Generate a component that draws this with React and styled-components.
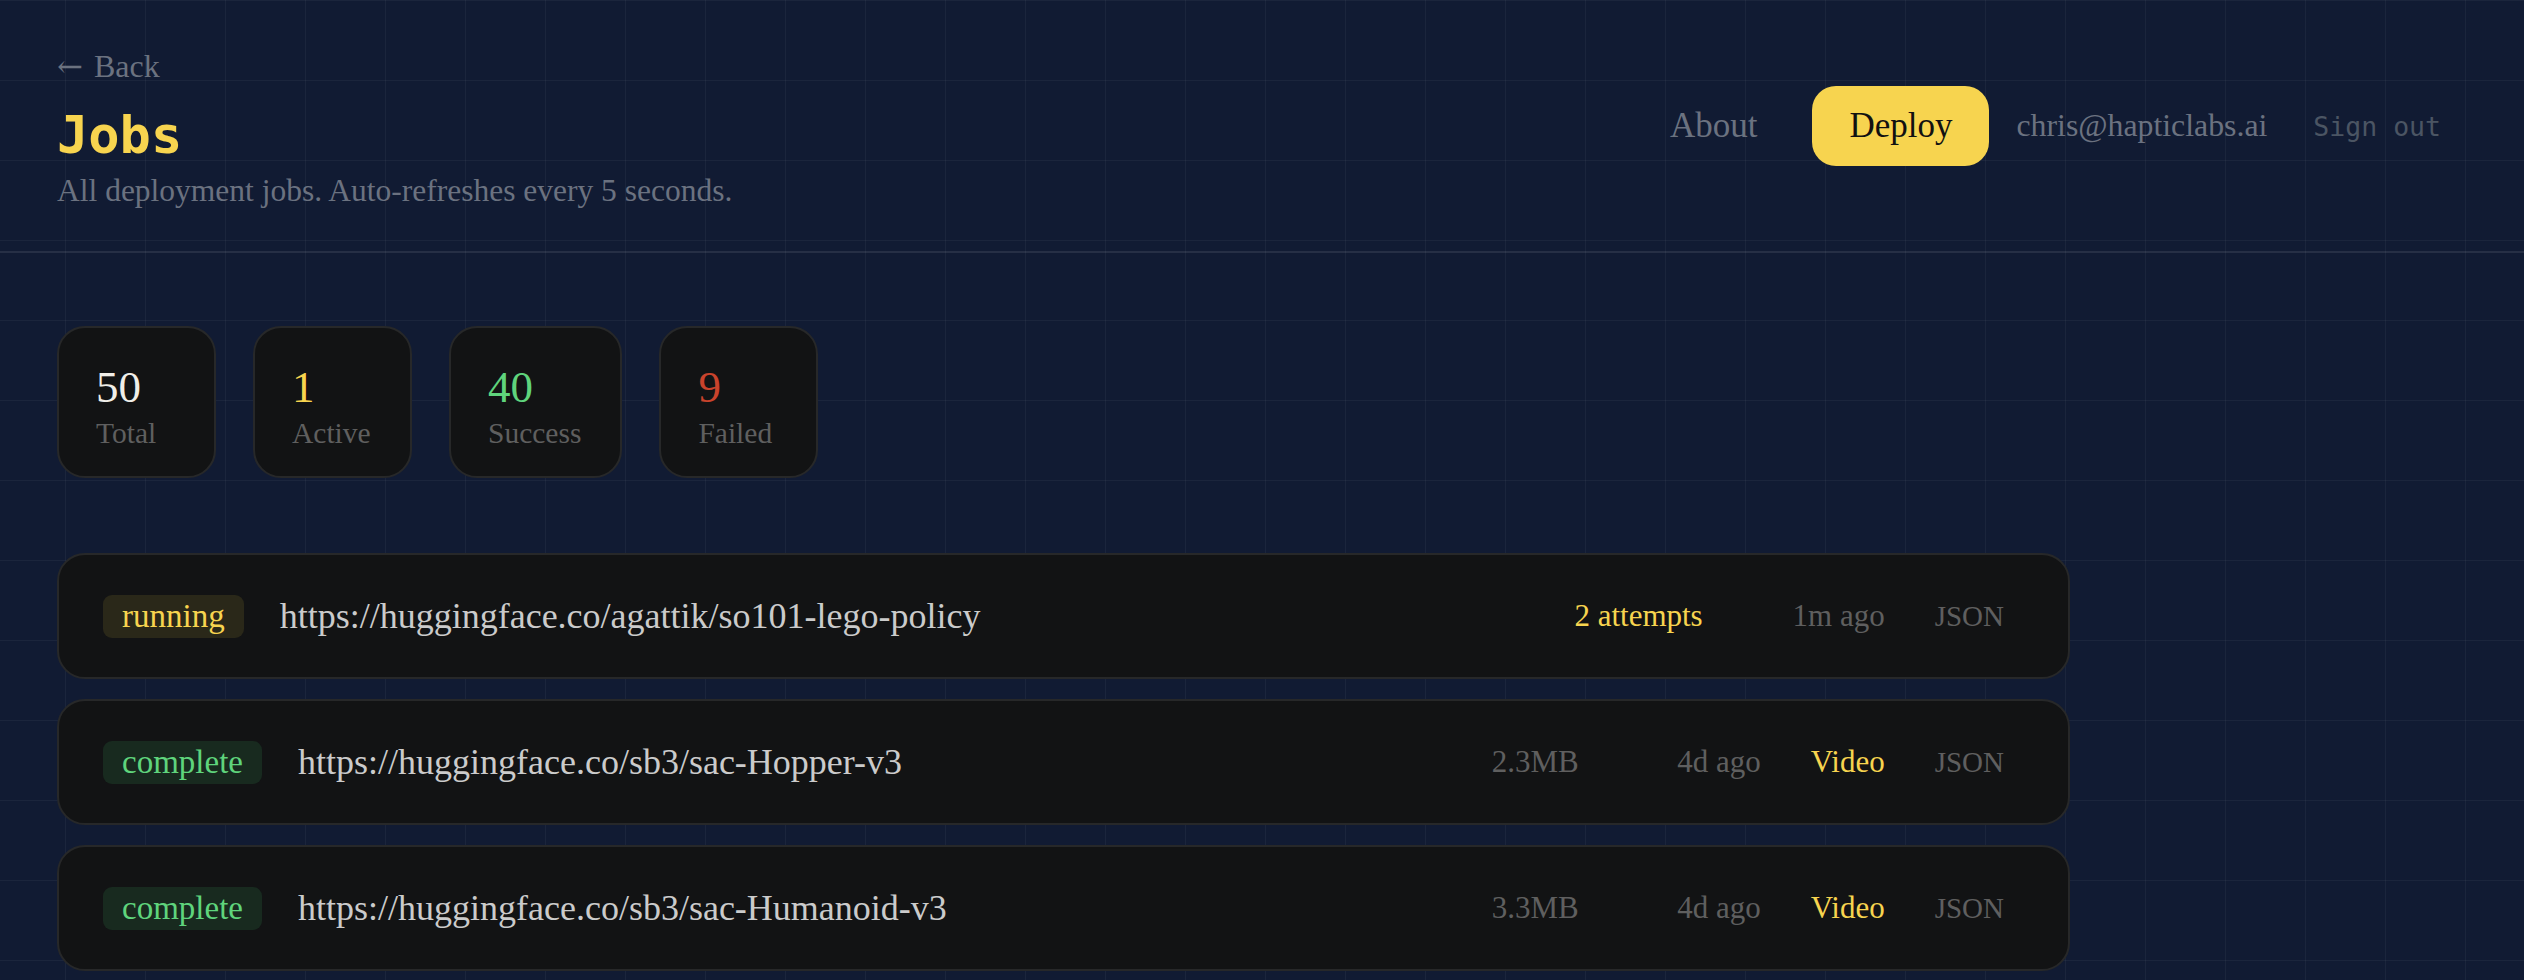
import React from "react";
import styled, { createGlobalStyle } from "styled-components";

const SERIF = `"Liberation Serif", "DejaVu Serif", serif`;
const MONO = `"DejaVu Sans Mono", monospace`;

const GlobalStyle = createGlobalStyle`
  html, body { margin: 0; padding: 0; }
  body {
    min-height: 980px;
    background-color: #111b33;
    background-image:
      linear-gradient(rgba(255,255,255,0.045) 1px, transparent 1px),
      linear-gradient(90deg, rgba(255,255,255,0.045) 1px, transparent 1px);
    background-size: 80px 80px;
    background-position: 65px 0;
    font-family: ${SERIF};
    color: #d1d1d1;
  }
`;

const Header = styled.header`
  display: flex;
  justify-content: space-between;
  align-items: flex-start;
  padding: 48px 83px 42px 57px;
  border-bottom: 2px solid rgba(255, 255, 255, 0.09);
`;

const TitleBlock = styled.div`
  display: flex;
  flex-direction: column;
`;

const BackLink = styled.a`
  font-size: 32px;
  line-height: 36px;
  color: #6b7280;
  text-decoration: none;
  margin-bottom: 21px;
`;

const Arrow = styled.span`
  font-family: "DejaVu Serif", serif;
  font-size: 31px;
  margin-right: 3px;
`;

const Title = styled.h1`
  margin: 0;
  font-family: ${MONO};
  font-weight: 700;
  font-size: 52px;
  line-height: 60px;
  color: #f7d44f;
`;

const Subtitle = styled.p`
  margin: 8px 0 0;
  font-size: 31.5px;
  line-height: 36px;
  color: #6b7280;
`;

const Nav = styled.nav`
  display: flex;
  align-items: center;
  margin-top: 38px;
`;

const NavLink = styled.a`
  font-size: 35px;
  color: #6b7280;
  text-decoration: none;
  margin-right: 55px;
`;

const DeployButton = styled.button`
  height: 80px;
  padding: 0 37px;
  border: none;
  border-radius: 24px;
  background: #f7d44f;
  color: #111111;
  font-family: ${SERIF};
  font-size: 35px;
  margin-right: 27px;
`;

const Email = styled.span`
  font-size: 31.8px;
  color: #6b7280;
  margin-right: 46px;
`;

const SignOut = styled.button`
  background: none;
  border: none;
  padding: 0;
  font-family: ${MONO};
  font-size: 26.5px;
  color: #4b5563;
`;

const Main = styled.main`
  padding: 73px 57px 0;
`;

const Stats = styled.div`
  display: flex;
  gap: 37px;
  margin-bottom: 75px;
`;

const StatCard = styled.div`
  box-sizing: border-box;
  min-width: 159px;
  height: 152px;
  padding: 35px 39px 0 37px;
  background: #121314;
  border: 2px solid #272829;
  border-radius: 28px;
  display: flex;
  flex-direction: column;
`;

const StatValue = styled.div`
  font-size: 45px;
  line-height: 48px;
  color: ${(p) => p.$color};
`;

const StatLabel = styled.div`
  font-size: 29.5px;
  line-height: 34px;
  margin-top: 5px;
  color: #5f5f5f;
`;

const JobList = styled.div`
  display: flex;
  flex-direction: column;
  gap: 20px;
  width: 2013px;
`;

const JobRow = styled.div`
  box-sizing: border-box;
  height: 126px;
  display: flex;
  align-items: center;
  padding: 0 64px 0 44px;
  background: #121314;
  border: 2px solid #272829;
  border-radius: 28px;
`;

const Badge = styled.span`
  flex: none;
  padding: 6px 19px;
  border-radius: 9px;
  font-size: 33px;
  line-height: 31px;
  background: ${(p) => (p.$status === "running" ? "#2a2819" : "#182a1f")};
  color: ${(p) => (p.$status === "running" ? "#f7d44f" : "#5fd47c")};
`;

const Url = styled.a`
  flex: 1;
  margin-left: 36px;
  font-size: 36px;
  color: #cbcbcb;
  text-decoration: none;
  white-space: nowrap;
`;

const Meta = styled.div`
  display: flex;
  align-items: baseline;
  gap: 50px;
  font-size: 31px;
`;

const MetaText = styled.span`
  color: ${(p) => (p.$accent ? "#f7d44f" : "#5f5f5f")};
`;

const TimeText = styled.span`
  width: 132px;
  text-align: right;
  color: #5f5f5f;
`;

const JsonLink = styled.a`
  font-size: 29px;
  color: #5f5f5f;
  text-decoration: none;
`;

const stats = [
  { value: "50", label: "Total", color: "#f0eee8" },
  { value: "1", label: "Active", color: "#f7d44f" },
  { value: "40", label: "Success", color: "#5fd47c" },
  { value: "9", label: "Failed", color: "#c9432c" },
];

const jobs = [
  {
    status: "running",
    url: "https://huggingface.co/agattik/so101-lego-policy",
    attempts: "2 attempts",
    time: "1m ago",
  },
  {
    status: "complete",
    url: "https://huggingface.co/sb3/sac-Hopper-v3",
    size: "2.3MB",
    time: "4d ago",
    video: true,
  },
  {
    status: "complete",
    url: "https://huggingface.co/sb3/sac-Humanoid-v3",
    size: "3.3MB",
    time: "4d ago",
    video: true,
  },
];

export default function App() {
  return (
    <>
      <GlobalStyle />
      <Header>
        <TitleBlock>
          <BackLink href="#">
            <Arrow>←</Arrow> Back
          </BackLink>
          <Title>Jobs</Title>
          <Subtitle>All deployment jobs. Auto-refreshes every 5 seconds.</Subtitle>
        </TitleBlock>
        <Nav>
          <NavLink href="#">About</NavLink>
          <DeployButton>Deploy</DeployButton>
          <Email>chris@hapticlabs.ai</Email>
          <SignOut>Sign out</SignOut>
        </Nav>
      </Header>
      <Main>
        <Stats>
          {stats.map((s) => (
            <StatCard key={s.label}>
              <StatValue $color={s.color}>{s.value}</StatValue>
              <StatLabel>{s.label}</StatLabel>
            </StatCard>
          ))}
        </Stats>
        <JobList>
          {jobs.map((j) => (
            <JobRow key={j.url}>
              <Badge $status={j.status}>{j.status}</Badge>
              <Url href="#">{j.url}</Url>
              <Meta>
                {j.attempts && <MetaText $accent>{j.attempts}</MetaText>}
                {j.size && <MetaText>{j.size}</MetaText>}
                <TimeText>{j.time}</TimeText>
                {j.video && <MetaText $accent>Video</MetaText>}
                <JsonLink href="#">JSON</JsonLink>
              </Meta>
            </JobRow>
          ))}
        </JobList>
      </Main>
    </>
  );
}
